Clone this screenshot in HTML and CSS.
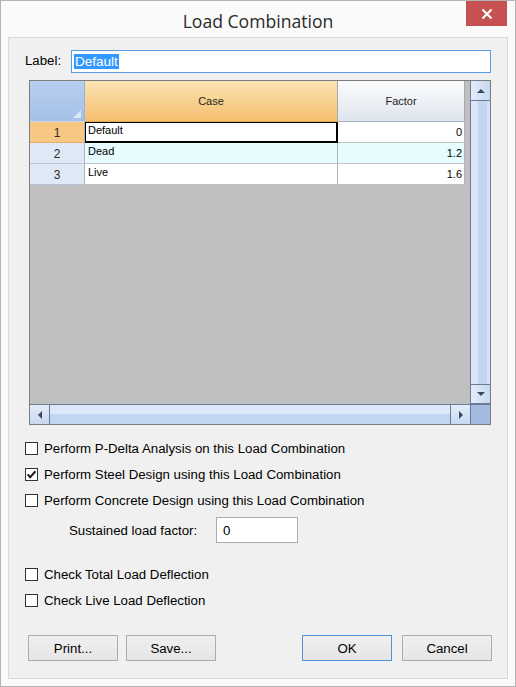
FILE: index.html
```html
<!DOCTYPE html>
<html>
<head>
<meta charset="utf-8">
<title>Load Combination</title>
<link rel="stylesheet" href="styles.css">
</head>
<body>
<div class="window">
  <div class="titlebar">
    <div class="title">Load Combination</div>
    <div class="close">
      <svg width="12" height="12" viewBox="0 0 12 12"><path d="M1.5 1.5 L10.5 10.5 M10.5 1.5 L1.5 10.5" stroke="#fff" stroke-width="2.2" fill="none"/></svg>
    </div>
  </div>
  <div class="client">
    <div class="label-row">
      <span class="label-text">Label:</span>
      <div class="textbox focused"><span class="selected">Default</span></div>
    </div>

    <div class="grid">
      <div class="grid-main">
        <div class="cells">
          <div class="table">
            <div class="corner-cell"><span class="corner-tri"></span></div>
            <div class="colhead case-head">Case</div>
            <div class="colhead factor-head">Factor</div>

            <div class="rowhead rowhead-sel">1</div>
            <div class="cell current">Default</div>
            <div class="cell num">0</div>

            <div class="rowhead">2</div>
            <div class="cell alt">Dead</div>
            <div class="cell num alt">1.2</div>

            <div class="rowhead">3</div>
            <div class="cell">Live</div>
            <div class="cell num">1.6</div>
          </div>
        </div>
        <div class="vscroll">
          <div class="sbtn"><span class="arrow up"></span></div>
          <div class="vtrack"></div>
          <div class="sbtn"><span class="arrow down"></span></div>
        </div>
      </div>
      <div class="grid-bottom">
        <div class="hscroll">
          <div class="sbtn h"><span class="arrow left"></span></div>
          <div class="htrack"></div>
          <div class="sbtn h"><span class="arrow right"></span></div>
        </div>
        <div class="sizebox"></div>
      </div>
    </div>

    <div class="check-row first">
      <span class="checkbox"></span>
      <span>Perform P-Delta Analysis on this Load Combination</span>
    </div>
    <div class="check-row">
      <span class="checkbox"><svg width="11" height="11" viewBox="0 0 11 11"><path d="M1.6 5.4 L4.2 8.2 L9.4 2.2" stroke="#1e1e1e" stroke-width="2.1" fill="none"/></svg></span>
      <span>Perform Steel Design using this Load Combination</span>
    </div>
    <div class="check-row">
      <span class="checkbox"></span>
      <span>Perform Concrete Design using this Load Combination</span>
    </div>
    <div class="sustained-row">
      <span class="sustained-label">Sustained load factor:</span>
      <div class="textbox small">0</div>
    </div>
    <div class="check-row gap">
      <span class="checkbox"></span>
      <span>Check Total Load Deflection</span>
    </div>
    <div class="check-row">
      <span class="checkbox"></span>
      <span>Check Live Load Deflection</span>
    </div>

    <div class="button-row">
      <div class="btn">Print...</div>
      <div class="btn btn-save">Save...</div>
      <div class="spacer"></div>
      <div class="btn default">OK</div>
      <div class="btn btn-cancel">Cancel</div>
    </div>
  </div>
</div>
</body>
</html>
```

FILE: styles.css
```css
* { box-sizing: border-box; }

html, body {
  margin: 0;
  padding: 0;
  background: #ffffff;
}

body {
  font-family: "Liberation Sans", Arial, sans-serif;
  font-size: 13.25px;
  color: #000;
}

.window {
  width: 516px;
  height: 687px;
  background: #fafafa;
  border: 1px solid #b4b4b4;
  display: flex;
  flex-direction: column;
}

.titlebar {
  height: 36px;
  display: grid;
  grid-template-columns: 1fr auto 1fr;
  align-items: start;
}

.title {
  grid-column: 2;
  font-family: "Open Sans", "Noto Sans", sans-serif;
  font-size: 17.6px;
  color: #2b2b2b;
  line-height: 20px;
  margin-top: 10px;
}

.close {
  grid-column: 3;
  justify-self: end;
  width: 41px;
  height: 25px;
  margin-right: 8px;
  background: #c75050;
  display: flex;
  align-items: center;
  justify-content: center;
}

.client {
  margin: 0 7px;
  width: 500px;
  height: 642px;
  background: #f0f0f0;
  border: 1px solid #d9d9d9;
  display: flex;
  flex-direction: column;
}

/* Label row */
.label-row {
  margin-top: 12px;
  padding-left: 16px;
  display: flex;
  align-items: center;
  height: 23px;
}

.label-text {
  width: 46px;
  margin-top: -3px;
}

.textbox {
  height: 23px;
  border: 1px solid #abadb3;
  background: #fff;
  display: flex;
  align-items: center;
  padding-left: 2px;
}

.textbox.focused {
  width: 420px;
  border-color: #569de5;
}

.selected {
  background: #3399ff;
  color: #fff;
  font-size: 13.5px;
  line-height: 15px;
  padding: 0 1px;
}

/* Grid */
.grid {
  margin-top: 7px;
  margin-left: 20px;
  width: 462px;
  height: 345px;
  border: 1px solid #7d7d7d;
  display: flex;
  flex-direction: column;
  font-size: 11px;
}

.grid-main {
  height: 323px;
  display: flex;
}

.cells {
  width: 440px;
  background: #c0c0c0;
}

.table {
  display: grid;
  grid-template-columns: 55px 253px 127px;
  grid-template-rows: 41px 21px 21px 21px;
  width: 435px;
}

.corner-cell {
  background: linear-gradient(#b7cff0, #a5c1e8);
  border-right: 1px solid #9db3d4;
  border-bottom: 1px solid #c8d8ee;
  display: flex;
  align-items: flex-end;
  justify-content: flex-end;
  padding: 0 3px 3px 0;
}

.corner-tri {
  width: 0;
  height: 0;
  border-left: 8px solid transparent;
  border-bottom: 8px solid #dbe7f7;
}

.colhead {
  display: flex;
  align-items: center;
  justify-content: center;
  color: #1e1e1e;
  border-right: 1px solid #a9a9a9;
}

.case-head {
  background: linear-gradient(#fbe3b3, #f5c06f);
  border-bottom: 1px solid #e5a64a;
}

.factor-head {
  background: linear-gradient(#fbfcfd, #dfe5ee);
  border-bottom: 1px solid #a9b4c6;
}

.rowhead {
  background: #dfe8f5;
  border-right: 1px solid #a7b4c8;
  border-bottom: 1px solid #b9c6d8;
  display: flex;
  align-items: center;
  justify-content: center;
  padding-top: 2px;
  font-size: 12px;
  color: #2a2a2a;
}

.rowhead-sel {
  background: #f7c784;
  border-bottom-color: #e6b06a;
}

.cell {
  background: #fff;
  border-right: 1px solid #b4b4b4;
  border-bottom: 1px solid #c3c3c3;
  padding: 1px 0 0 3px;
  line-height: 14px;
  color: #000;
}

.cell.num {
  text-align: right;
  padding: 3px 2px 0 0;
}

.cell.alt {
  background: #e6fcff;
}

.cell.current {
  border-color: #000;
  box-shadow: inset 0 0 0 1px #000;
}

/* Scrollbars */
.vscroll {
  width: 20px;
  display: flex;
  flex-direction: column;
  border-left: 1px solid #6b7b97;
}

.sbtn {
  height: 20px;
  background: linear-gradient(90deg, #e4edf9, #c7d8f1);
  border: 1px solid #6b7b97;
  border-left: none;
  border-right: none;
  display: flex;
  align-items: center;
  justify-content: center;
}

.sbtn:first-child { border-top: none; }

.sbtn.h {
  width: 20px;
  height: auto;
  border: none;
  border-right: 1px solid #6b7b97;
  background: linear-gradient(#e4edf9, #c7d8f1);
}

.sbtn.h:last-child {
  border-right: none;
  border-left: 1px solid #6b7b97;
}

.vtrack {
  flex: 1;
  background: linear-gradient(90deg, #dbe7f8 0 38%, #c2d5f1 38% 86%, #d3e1f5 86%);
}

.grid-bottom {
  height: 20px;
  display: flex;
  border-top: 1px solid #6b7b97;
}

.hscroll {
  width: 440px;
  display: flex;
}

.htrack {
  flex: 1;
  background: linear-gradient(#dce8f8 0 45%, #c2d5f1 45%);
}

.sizebox {
  width: 20px;
  background: #a3bbe0;
  border-left: 1px solid #6b7b97;
}

.arrow {
  width: 0;
  height: 0;
}

.arrow.up {
  border-left: 4px solid transparent;
  border-right: 4px solid transparent;
  border-bottom: 4px solid #3b475c;
}

.arrow.down {
  border-left: 4px solid transparent;
  border-right: 4px solid transparent;
  border-top: 4px solid #3b475c;
}

.arrow.left {
  border-top: 4px solid transparent;
  border-bottom: 4px solid transparent;
  border-right: 4px solid #3b475c;
}

.arrow.right {
  border-top: 4px solid transparent;
  border-bottom: 4px solid transparent;
  border-left: 4px solid #3b475c;
}

/* Checkboxes */
.check-row {
  height: 26px;
  padding-left: 16px;
  display: flex;
  align-items: center;
  gap: 6px;
}

.check-row.first { margin-top: 10px; }
.check-row.gap { margin-top: 18px; }

.checkbox {
  width: 13px;
  height: 13px;
  border: 1px solid #333;
  background: #fff;
  display: flex;
  align-items: center;
  justify-content: center;
  flex: none;
}

.sustained-row {
  margin-top: 4px;
  height: 26px;
  display: flex;
  align-items: center;
  padding-left: 60px;
}

.sustained-label {
  width: 147px;
}

.textbox.small {
  width: 82px;
  height: 26px;
  padding-left: 6px;
}

/* Buttons */
.button-row {
  margin-top: 22px;
  padding-left: 19px;
  display: flex;
  height: 26px;
}

.btn {
  width: 90px;
  height: 26px;
  border: 1px solid #acacac;
  background: linear-gradient(#f0f0f0, #e5e5e5);
  display: flex;
  align-items: center;
  justify-content: center;
}

.btn-save { margin-left: 8px; }
.btn-cancel { margin-left: 10px; }

.spacer { flex: 1; }

.btn.default {
  border-color: #4f93d3;
}

.button-row .btn-cancel { margin-right: 15px; }
```
